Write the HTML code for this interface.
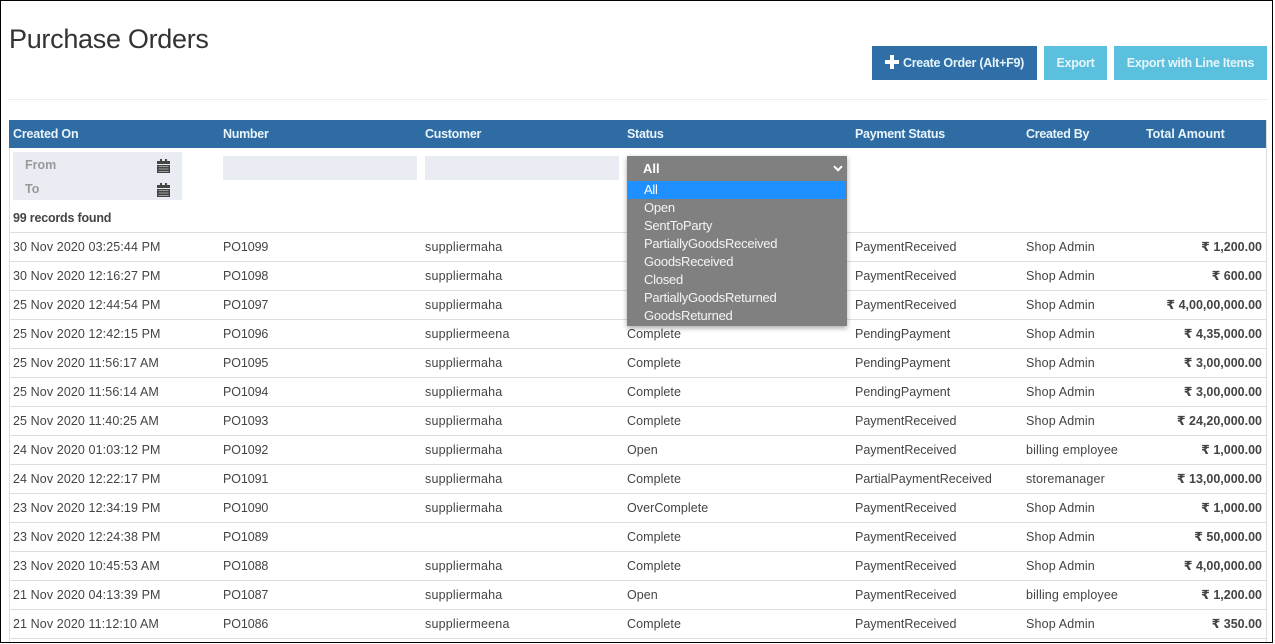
<!DOCTYPE html>
<html><head><meta charset="utf-8"><style>
html,body{margin:0;padding:0;background:#fff;width:1275px;height:644px;overflow:hidden}
body{position:relative;font-family:"Liberation Sans","DejaVu Sans",sans-serif;font-size:12.5px;color:#444;letter-spacing:.06px}
.a{position:absolute;white-space:nowrap}
.b{position:absolute;background:#000}
.l{position:absolute;left:9px;width:1257px;height:1px;background:#ddd}
.c{position:absolute;height:16px;line-height:16px;white-space:nowrap;margin-top:1px}
.c[style*="left:13px"]{letter-spacing:.1px}
.c[style*="left:223px"]{letter-spacing:-.1px}
.c[style*="left:425px"]{letter-spacing:.2px}
.c[style*="left:855px"]{letter-spacing:0}
.c[style*="left:1026px"]{letter-spacing:.15px}
.th{position:absolute;top:126px;line-height:16px;color:#e8f4fb;font-weight:bold;font-size:12.5px;letter-spacing:-.28px}
.btn{position:absolute;top:46px;height:34px;line-height:35px;text-align:center;color:#e6f5fa;font-weight:bold;font-size:12.5px;letter-spacing:-.27px}
.f{position:absolute;background:#e9ecf3}
.o{position:absolute;left:644px;height:18px;line-height:18px;color:#f4f4f4;font-size:13px;letter-spacing:-.25px;white-space:nowrap;margin-top:1px}
.amt{position:absolute;right:13px;height:16px;line-height:16px;font-weight:bold;white-space:nowrap;letter-spacing:0;margin-top:1px}
</style></head><body>
<div class="b" style="left:0;top:0;width:1273px;height:1px"></div>
<div class="b" style="left:0;top:0;width:1px;height:643px"></div>
<div class="b" style="left:1272px;top:0;width:1px;height:643px"></div>
<div class="b" style="left:0;top:642px;width:1273px;height:1px"></div>

<div class="a" style="left:9px;top:22px;font-size:27px;line-height:34px;color:#333;letter-spacing:-.3px">Purchase Orders</div>

<div class="btn" style="left:872px;width:165px;background:#2f6ea6"><svg width="14" height="14" viewBox="0 0 14 14" style="vertical-align:-2px;margin-right:4px"><path d="M5 0h4v5h5v4H9v5H5V9H0V5h5z" fill="#fff"/></svg>Create Order (Alt+F9)</div>
<div class="btn" style="left:1044px;width:63px;background:#5bc0de">Export</div>
<div class="btn" style="left:1114px;width:153px;background:#5bc0de">Export with Line Items</div>
<div class="a" style="left:8px;top:99px;width:1259px;height:1px;background:#eee"></div>

<div class="a" style="left:1266px;top:120px;width:1px;height:522px;background:#ddd"></div>
<div class="a" style="left:9px;top:148px;width:1px;height:494px;background:#ddd"></div>
<div class="a" style="left:9px;top:120px;width:1257px;height:28px;background:#2f6ca3"></div>
<div class="th" style="left:13px;letter-spacing:-.2px">Created On</div>
<div class="th" style="left:223px">Number</div>
<div class="th" style="left:425px">Customer</div>
<div class="th" style="left:627px">Status</div>
<div class="th" style="left:855px">Payment Status</div>
<div class="th" style="left:1026px">Created By</div>
<div class="th" style="left:1146px;letter-spacing:-.03px">Total Amount</div>

<div class="f" style="left:13px;top:152px;width:169px;height:48px"></div>
<div class="a" style="left:25px;top:157px;line-height:16px;color:#999;font-weight:bold;font-size:12.5px;letter-spacing:0">From</div>
<div class="a" style="left:25px;top:181px;line-height:16px;color:#999;font-weight:bold;font-size:12.5px;letter-spacing:0">To</div>
<svg class="a" style="left:157px;top:159px" width="13" height="14" viewBox="0 0 13 14"><path d="M0 2h3V0h2v2h3V0h2v2h3v3H0z" fill="#444"/><path d="M0 6h13v8H0z" fill="#444"/><path d="M1.500 7.500h10M1.500 10h10M1.500 12.500h10" stroke="#bbb" stroke-width=".8"/></svg>
<svg class="a" style="left:157px;top:183px" width="13" height="14" viewBox="0 0 13 14"><path d="M0 2h3V0h2v2h3V0h2v2h3v3H0z" fill="#444"/><path d="M0 6h13v8H0z" fill="#444"/><path d="M1.500 7.500h10M1.500 10h10M1.500 12.500h10" stroke="#bbb" stroke-width=".8"/></svg>
<div class="f" style="left:223px;top:156px;width:194px;height:24px"></div>
<div class="f" style="left:425px;top:156px;width:194px;height:24px"></div>
<div class="a" style="left:13px;top:210px;line-height:16px;font-weight:bold;color:#444;letter-spacing:-.2px">99 records found</div>

<div class="l" style="top:232px"></div><div class="l" style="top:261px"></div><div class="l" style="top:290px"></div><div class="l" style="top:319px"></div><div class="l" style="top:348px"></div><div class="l" style="top:377px"></div><div class="l" style="top:406px"></div><div class="l" style="top:435px"></div><div class="l" style="top:464px"></div><div class="l" style="top:493px"></div><div class="l" style="top:522px"></div><div class="l" style="top:551px"></div><div class="l" style="top:580px"></div><div class="l" style="top:609px"></div><div class="l" style="top:638px"></div>

<div class="c" style="left:13px;top:238px">30 Nov 2020 03:25:44 PM</div><div class="c" style="left:223px;top:238px">PO1099</div><div class="c" style="left:425px;top:238px">suppliermaha</div><div class="c" style="left:855px;top:238px">PaymentReceived</div><div class="c" style="left:1026px;top:238px">Shop Admin</div><div class="amt" style="top:238px">₹ 1,200.00</div>
<div class="c" style="left:13px;top:267px">30 Nov 2020 12:16:27 PM</div><div class="c" style="left:223px;top:267px">PO1098</div><div class="c" style="left:425px;top:267px">suppliermaha</div><div class="c" style="left:855px;top:267px">PaymentReceived</div><div class="c" style="left:1026px;top:267px">Shop Admin</div><div class="amt" style="top:267px">₹ 600.00</div>
<div class="c" style="left:13px;top:296px">25 Nov 2020 12:44:54 PM</div><div class="c" style="left:223px;top:296px">PO1097</div><div class="c" style="left:425px;top:296px">suppliermaha</div><div class="c" style="left:855px;top:296px">PaymentReceived</div><div class="c" style="left:1026px;top:296px">Shop Admin</div><div class="amt" style="top:296px">₹ 4,00,00,000.00</div>
<div class="c" style="left:13px;top:325px">25 Nov 2020 12:42:15 PM</div><div class="c" style="left:223px;top:325px">PO1096</div><div class="c" style="left:425px;top:325px">suppliermeena</div><div class="c" style="left:627px;top:325px">Complete</div><div class="c" style="left:855px;top:325px">PendingPayment</div><div class="c" style="left:1026px;top:325px">Shop Admin</div><div class="amt" style="top:325px">₹ 4,35,000.00</div>
<div class="c" style="left:13px;top:354px">25 Nov 2020 11:56:17 AM</div><div class="c" style="left:223px;top:354px">PO1095</div><div class="c" style="left:425px;top:354px">suppliermaha</div><div class="c" style="left:627px;top:354px">Complete</div><div class="c" style="left:855px;top:354px">PendingPayment</div><div class="c" style="left:1026px;top:354px">Shop Admin</div><div class="amt" style="top:354px">₹ 3,00,000.00</div>
<div class="c" style="left:13px;top:383px">25 Nov 2020 11:56:14 AM</div><div class="c" style="left:223px;top:383px">PO1094</div><div class="c" style="left:425px;top:383px">suppliermaha</div><div class="c" style="left:627px;top:383px">Complete</div><div class="c" style="left:855px;top:383px">PendingPayment</div><div class="c" style="left:1026px;top:383px">Shop Admin</div><div class="amt" style="top:383px">₹ 3,00,000.00</div>
<div class="c" style="left:13px;top:412px">25 Nov 2020 11:40:25 AM</div><div class="c" style="left:223px;top:412px">PO1093</div><div class="c" style="left:425px;top:412px">suppliermaha</div><div class="c" style="left:627px;top:412px">Complete</div><div class="c" style="left:855px;top:412px">PaymentReceived</div><div class="c" style="left:1026px;top:412px">Shop Admin</div><div class="amt" style="top:412px">₹ 24,20,000.00</div>
<div class="c" style="left:13px;top:441px">24 Nov 2020 01:03:12 PM</div><div class="c" style="left:223px;top:441px">PO1092</div><div class="c" style="left:425px;top:441px">suppliermaha</div><div class="c" style="left:627px;top:441px">Open</div><div class="c" style="left:855px;top:441px">PaymentReceived</div><div class="c" style="left:1026px;top:441px">billing employee</div><div class="amt" style="top:441px">₹ 1,000.00</div>
<div class="c" style="left:13px;top:470px">24 Nov 2020 12:22:17 PM</div><div class="c" style="left:223px;top:470px">PO1091</div><div class="c" style="left:425px;top:470px">suppliermaha</div><div class="c" style="left:627px;top:470px">Complete</div><div class="c" style="left:855px;top:470px">PartialPaymentReceived</div><div class="c" style="left:1026px;top:470px">storemanager</div><div class="amt" style="top:470px">₹ 13,00,000.00</div>
<div class="c" style="left:13px;top:499px">23 Nov 2020 12:34:19 PM</div><div class="c" style="left:223px;top:499px">PO1090</div><div class="c" style="left:425px;top:499px">suppliermaha</div><div class="c" style="left:627px;top:499px">OverComplete</div><div class="c" style="left:855px;top:499px">PaymentReceived</div><div class="c" style="left:1026px;top:499px">Shop Admin</div><div class="amt" style="top:499px">₹ 1,000.00</div>
<div class="c" style="left:13px;top:528px">23 Nov 2020 12:24:38 PM</div><div class="c" style="left:223px;top:528px">PO1089</div><div class="c" style="left:627px;top:528px">Complete</div><div class="c" style="left:855px;top:528px">PaymentReceived</div><div class="c" style="left:1026px;top:528px">Shop Admin</div><div class="amt" style="top:528px">₹ 50,000.00</div>
<div class="c" style="left:13px;top:557px">23 Nov 2020 10:45:53 AM</div><div class="c" style="left:223px;top:557px">PO1088</div><div class="c" style="left:425px;top:557px">suppliermaha</div><div class="c" style="left:627px;top:557px">Complete</div><div class="c" style="left:855px;top:557px">PaymentReceived</div><div class="c" style="left:1026px;top:557px">Shop Admin</div><div class="amt" style="top:557px">₹ 4,00,000.00</div>
<div class="c" style="left:13px;top:586px">21 Nov 2020 04:13:39 PM</div><div class="c" style="left:223px;top:586px">PO1087</div><div class="c" style="left:425px;top:586px">suppliermaha</div><div class="c" style="left:627px;top:586px">Open</div><div class="c" style="left:855px;top:586px">PaymentReceived</div><div class="c" style="left:1026px;top:586px">billing employee</div><div class="amt" style="top:586px">₹ 1,200.00</div>
<div class="c" style="left:13px;top:615px">21 Nov 2020 11:12:10 AM</div><div class="c" style="left:223px;top:615px">PO1086</div><div class="c" style="left:425px;top:615px">suppliermeena</div><div class="c" style="left:627px;top:615px">Complete</div><div class="c" style="left:855px;top:615px">PaymentReceived</div><div class="c" style="left:1026px;top:615px">Shop Admin</div><div class="amt" style="top:615px">₹ 350.00</div>

<div class="a" style="left:627px;top:156px;width:220px;height:170px;background:#808080;box-shadow:0 2px 5px rgba(0,0,0,.35)"></div>
<div class="a" style="left:643px;top:161px;line-height:16px;color:#fff;font-weight:bold;font-size:13px;letter-spacing:0">All</div>
<svg class="a" style="left:833px;top:165px" width="10" height="7" viewBox="0 0 10 7"><path d="M1 1.200l4 4 4-4" fill="none" stroke="#fff" stroke-width="2"/></svg>
<div class="a" style="left:628px;top:181px;width:218px;height:18px;background:#1e90ff"></div>
<div class="o" style="top:180px;color:#fff">All</div>
<div class="o" style="top:198px">Open</div>
<div class="o" style="top:216px">SentToParty</div>
<div class="o" style="top:234px">PartiallyGoodsReceived</div>
<div class="o" style="top:252px">GoodsReceived</div>
<div class="o" style="top:270px">Closed</div>
<div class="o" style="top:288px">PartiallyGoodsReturned</div>
<div class="o" style="top:306px">GoodsReturned</div>
</body></html>
